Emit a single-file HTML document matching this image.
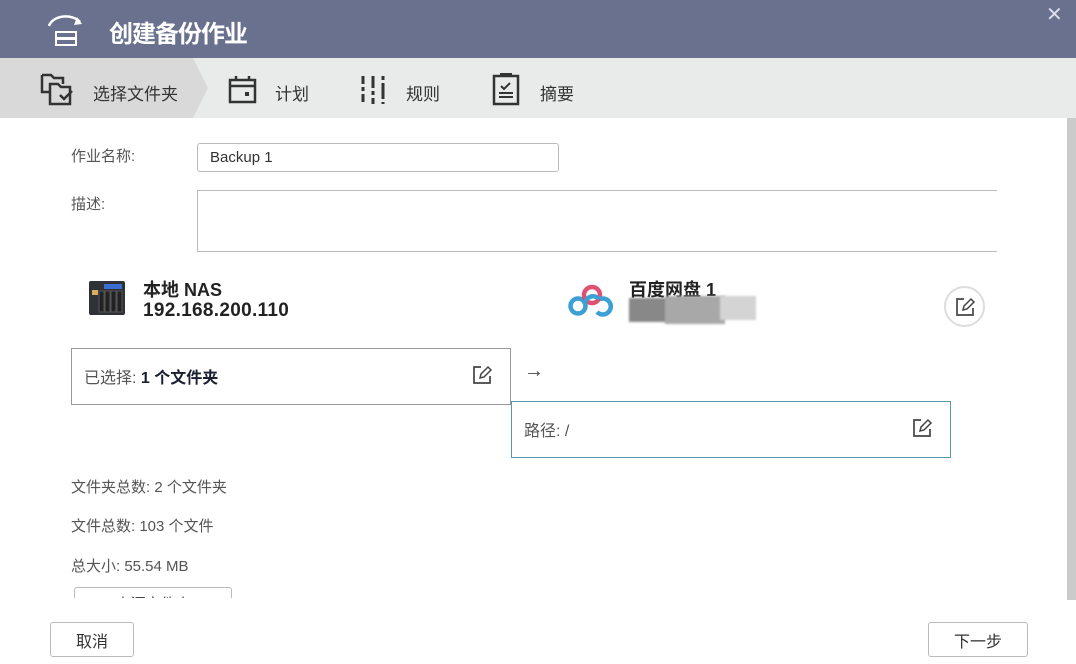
<!DOCTYPE html>
<html><head><meta charset="utf-8"><style>
*{margin:0;padding:0;box-sizing:border-box}
body{width:1076px;height:664px;overflow:hidden;background:#fff;font-family:"Liberation Sans","Noto Sans CJK SC",sans-serif;color:#333;position:relative}
.abs{position:absolute}
.hdr{left:0;top:0;width:1076px;height:58px;background:#69718e}
.tabs{left:0;top:58px;width:1076px;height:60px;background:#e9eaea}
.t{font-size:17px;color:#333}
.lbl{font-size:15px;color:#555}
.box{border:1px solid #bbb}
</style></head><body>
<div class="abs hdr"></div>
<svg class="abs" style="left:44px;top:12px" width="46" height="34" viewBox="0 0 46 34"><path d="M5 14 A17 12 0 0 1 36 10" fill="none" stroke="#fff" stroke-width="2.5"/><path d="M33 5 L38 12 L30 13 Z" fill="#fff"/><rect x="12" y="20" width="20" height="6" fill="none" stroke="#fff" stroke-width="2"/><rect x="12" y="27" width="20" height="6" fill="none" stroke="#fff" stroke-width="2"/></svg>
<div class="abs" style="left:109px;top:14px;font-size:24px;font-weight:bold;color:#fff;letter-spacing:-1px">创建备份作业</div>
<div class="abs" style="left:1046px;top:2px;font-size:20px;color:#dde">✕</div>
<div class="abs tabs"></div>
<svg class="abs" style="left:0;top:58px" width="210" height="60"><polygon points="0,0 193,0 208,30 193,60 0,60" fill="#d9d9d9"/></svg>
<svg class="abs" style="left:40px;top:73px" width="38" height="34" viewBox="0 0 38 34"><path d="M2 2h9l3 3h9v6M2 2v17h8" fill="none" stroke="#333" stroke-width="2.5"/><path d="M10 11h8l3 3h9v17H10z" fill="none" stroke="#333" stroke-width="2.5"/><path d="M20 22l4 4 8-8" fill="none" stroke="#333" stroke-width="2.5"/></svg>
<div class="abs t" style="left:93px;top:80px">选择文件夹</div>
<svg class="abs" style="left:228px;top:75px" width="30" height="30"><rect x="2" y="5" width="25" height="22" fill="none" stroke="#333" stroke-width="2.5"/><line x1="2" y1="11" x2="27" y2="11" stroke="#333" stroke-width="2.5"/><line x1="8" y1="1" x2="8" y2="6" stroke="#333" stroke-width="2.5"/><line x1="21" y1="1" x2="21" y2="6" stroke="#333" stroke-width="2.5"/><rect x="17" y="17" width="4" height="4" fill="#333"/></svg>
<div class="abs t" style="left:275px;top:80px">计划</div>
<svg class="abs" style="left:360px;top:75px" width="28" height="30"><g stroke="#333" stroke-width="3"><line x1="3" y1="1" x2="3" y2="29" stroke-dasharray="8 3 4 3"/><line x1="13" y1="1" x2="13" y2="29" stroke-dasharray="12 3 4 3"/><line x1="23" y1="1" x2="23" y2="29" stroke-dasharray="4 3 16 3"/></g></svg>
<div class="abs t" style="left:406px;top:80px">规则</div>
<svg class="abs" style="left:492px;top:72px" width="28" height="34"><rect x="2" y="4" width="24" height="28" fill="none" stroke="#333" stroke-width="2.5"/><rect x="8" y="1" width="12" height="4" fill="#333"/><path d="M9 14l3 3 6-6" fill="none" stroke="#333" stroke-width="2"/><line x1="7" y1="21" x2="21" y2="21" stroke="#333" stroke-width="2"/><line x1="7" y1="25" x2="21" y2="25" stroke="#333" stroke-width="2"/></svg>
<div class="abs t" style="left:540px;top:80px">摘要</div>
<div class="abs" style="left:1067px;top:118px;width:9px;height:482px;background:#cbcbcb"></div>

<div class="abs lbl" style="left:71px;top:145px">作业名称:</div>
<div class="abs box" style="left:197px;top:143px;width:362px;height:29px;border-radius:3px;padding:5px 12px;font-size:15px;color:#333">Backup 1</div>
<div class="abs lbl" style="left:71px;top:193px">描述:</div>
<div class="abs" style="left:197px;top:190px;width:800px;height:62px;border-top:1px solid #bbb;border-bottom:1px solid #bbb;border-left:1px solid #bbb"></div>

<svg class="abs" style="left:88px;top:281px" width="38" height="34"><rect x="1" y="0" width="36" height="34" rx="2" fill="#2f3136"/><rect x="16" y="3" width="18" height="5" fill="#3a6fd0"/><rect x="4" y="9" width="6" height="5" fill="#d6b060"/><g fill="#222" stroke="#555"><rect x="11" y="10" width="5" height="21"/><rect x="17" y="10" width="5" height="21"/><rect x="23" y="10" width="5" height="21"/><rect x="29" y="10" width="5" height="21"/></g></svg>
<div class="abs" style="left:143px;top:276px;font-size:18px;font-weight:bold;color:#222">本地 NAS</div>
<div class="abs" style="left:143px;top:300px;font-size:19px;font-weight:bold;color:#222;letter-spacing:0.3px">192.168.200.110</div>

<svg class="abs" style="left:567px;top:282px" width="52" height="38" viewBox="0 0 52 38"><g fill="none" stroke-width="4.5"><circle cx="11" cy="24" r="7.5" stroke="#3aa0d6"/><circle cx="25" cy="13" r="8" stroke="#e05070"/><path d="M18 22 A8 8 0 0 1 32 17" stroke="#3aa0d6"/><path d="M30 30 A8 8 0 1 0 33 17" stroke="#3aa0d6"/></g></svg>
<div class="abs" style="left:629px;top:276px;font-size:18px;font-weight:bold;color:#222">百度网盘 1</div>
<div class="abs" style="left:629px;top:298px;width:40px;height:24px;background:#888;filter:blur(1px)"></div>
<div class="abs" style="left:665px;top:296px;width:60px;height:28px;background:#a8a8a8;filter:blur(1px)"></div>
<div class="abs" style="left:720px;top:296px;width:36px;height:24px;background:#d4d4d4;filter:blur(1px)"></div>
<div class="abs" style="left:944px;top:286px;width:41px;height:41px;border:2px solid #ddd;border-radius:50%"></div>
<svg class="abs" style="left:954px;top:296px" width="22" height="22"><path d="M10 3H3v16h16v-7" fill="none" stroke="#444" stroke-width="1.7"/><path d="M9 14l1-4 7-7 3 3-7 7z" fill="none" stroke="#444" stroke-width="1.5"/></svg>

<div class="abs box" style="left:71px;top:348px;width:440px;height:57px;border-color:#999"></div>
<div class="abs" style="left:84px;top:364px;font-size:16px;color:#555">已选择: <b style="color:#1a2030">1 个文件夹</b></div>
<svg class="abs" style="left:471px;top:364px" width="22" height="22"><path d="M10 3H3v16h16v-7" fill="none" stroke="#444" stroke-width="1.7"/><path d="M9 14l1-4 7-7 3 3-7 7z" fill="none" stroke="#444" stroke-width="1.5"/></svg>
<div class="abs" style="left:524px;top:360px;font-size:20px;color:#444">→</div>
<div class="abs" style="left:511px;top:401px;width:440px;height:57px;border:1px solid #5a9aa8"></div>
<div class="abs" style="left:524px;top:417px;font-size:16px;color:#555">路径: /</div>
<svg class="abs" style="left:911px;top:417px" width="22" height="22"><path d="M10 3H3v16h16v-7" fill="none" stroke="#444" stroke-width="1.7"/><path d="M9 14l1-4 7-7 3 3-7 7z" fill="none" stroke="#444" stroke-width="1.5"/></svg>

<div class="abs lbl" style="left:71px;top:476px">文件夹总数: 2 个文件夹</div>
<div class="abs lbl" style="left:71px;top:515px">文件总数: 103 个文件</div>
<div class="abs lbl" style="left:71px;top:555px">总大小: 55.54 MB</div>
<div class="abs" style="left:74px;top:587px;width:158px;height:11px;overflow:hidden"><div style="border:1px solid #bbb;border-radius:3px;height:30px;text-align:center;font-size:15px;padding-top:5px;color:#444">来源文件夹</div></div>

<div class="abs box" style="left:50px;top:622px;width:84px;height:35px;border-radius:3px;text-align:center;padding-top:5px;font-size:16px;color:#333">取消</div>
<div class="abs box" style="left:928px;top:622px;width:100px;height:35px;border-radius:3px;text-align:center;padding-top:5px;font-size:16px;color:#333">下一步</div>
</body></html>
